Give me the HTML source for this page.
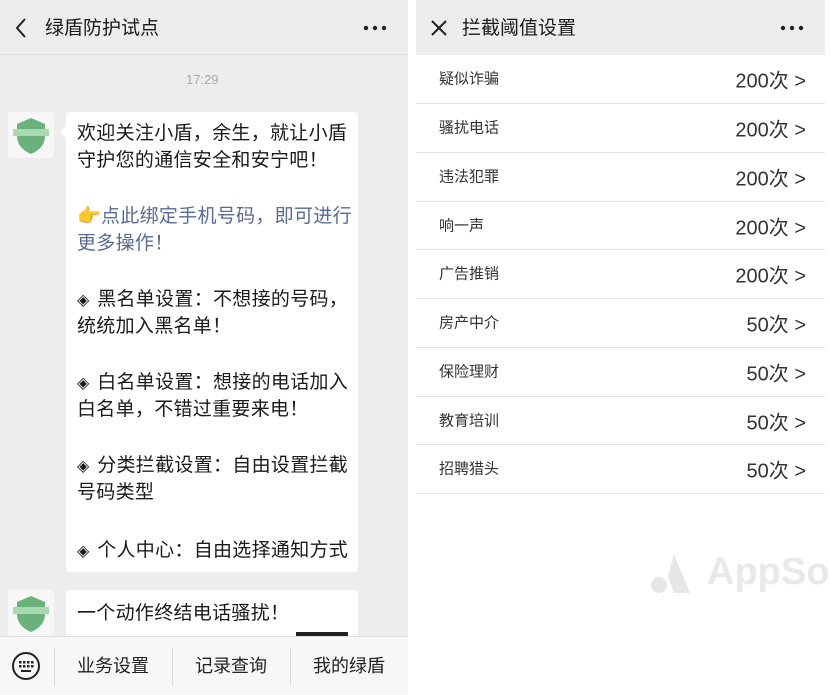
<!DOCTYPE html>
<html><head><meta charset="utf-8"><style>
*{margin:0;padding:0;box-sizing:border-box}
body{width:830px;height:695px;background:#fff;position:relative;overflow:hidden;font-family:"Liberation Sans","Noto Sans CJK SC",sans-serif;color:#1a1a1a}
.abs{position:absolute}
#L{left:0;top:0;width:408px;height:695px;background:#ededed}
.ln{position:absolute;left:77px;font-size:19px;line-height:27px;white-space:nowrap;letter-spacing:0.3px}
.ln i{font-style:normal;font-size:16px;margin-right:2px}
.av{position:absolute;left:8px;width:46px;height:46px;background:#f7f7f7;border-radius:3px}
.row{position:absolute;left:416px;width:409px;border-bottom:1px solid #e2e2e2;background:#fff}
.row .k{position:absolute;left:23px;top:50%;transform:translateY(-50%);font-size:15px;color:#333;margin-top:-1px}
.row .v{position:absolute;right:19px;top:50%;transform:translateY(-50%);font-size:20px;color:#333}
.tab{position:absolute;top:652px;font-size:18px;color:#222;width:118px;text-align:center}
</style></head><body>
<div id="L">
 <div class="abs" style="left:0;top:0;width:408px;height:55px;background:#ededed;border-bottom:1px solid #e0e0e0"></div>
 <svg class="abs" style="left:14px;top:17px" width="14" height="22"><path d="M11 2 L3 11 L11 20" stroke="#222" stroke-width="2" fill="none"/></svg>
 <div class="abs" style="left:45px;top:13px;font-size:19px;color:#1a1a1a">绿盾防护试点</div>
 <svg class="abs" style="left:362px;top:24px" width="26" height="8"><circle cx="4" cy="4" r="2.2" fill="#222"/><circle cx="13" cy="4" r="2.2" fill="#222"/><circle cx="22" cy="4" r="2.2" fill="#222"/></svg>
 <div class="abs" style="left:186px;top:72px;font-size:13px;color:#aaa">17:29</div>

 <div class="av" style="top:112px"><svg width="46" height="46"><path d="M23 6 L37 12 L37 24 Q37 36 23 42 Q9 36 9 24 L9 12 Z" fill="#6ab27c"/><rect x="5" y="17" width="36" height="7" fill="#a9d9b0"/></svg></div>
 <div class="abs" style="left:66px;top:112px;width:292px;height:460px;background:#fff;border-radius:4px"></div>
 <div class="abs" style="left:60px;top:126px;width:0;height:0;border:6px solid transparent;border-right-color:#fff;border-left:0"></div>
 <div class="ln" style="top:120px">欢迎关注小盾，余生，就让小盾</div>
 <div class="ln" style="top:147px">守护您的通信安全和安宁吧！</div>
 <div class="ln" style="top:203px;color:#576b95"><span style="color:#d7a77c">👉</span>点此绑定手机号码，即可进行</div>
 <div class="ln" style="top:230px;color:#576b95">更多操作！</div>
 <div class="ln" style="top:286px"><i>◈</i> 黑名单设置：不想接的号码，</div>
 <div class="ln" style="top:313px">统统加入黑名单！</div>
 <div class="ln" style="top:369px"><i>◈</i> 白名单设置：想接的电话加入</div>
 <div class="ln" style="top:396px">白名单，不错过重要来电！</div>
 <div class="ln" style="top:452px"><i>◈</i> 分类拦截设置：自由设置拦截</div>
 <div class="ln" style="top:479px">号码类型</div>
 <div class="ln" style="top:537px"><i>◈</i> 个人中心：自由选择通知方式</div>

 <div class="av" style="top:590px"><svg width="46" height="46"><path d="M23 6 L37 12 L37 24 Q37 36 23 42 Q9 36 9 24 L9 12 Z" fill="#6ab27c"/><rect x="5" y="17" width="36" height="7" fill="#a9d9b0"/></svg></div>
 <div class="abs" style="left:66px;top:590px;width:292px;height:50px;background:#fff;border-radius:4px"></div>
 <div class="ln" style="top:600px">一个动作终结电话骚扰！</div>
 <div class="abs" style="left:296px;top:632px;width:52px;height:4px;background:#222"></div>

 <div class="abs" style="left:0;top:636px;width:408px;height:59px;background:#f7f7f7;border-top:1px solid #ddd"></div>
 <svg class="abs" style="left:11px;top:651px" width="30" height="30"><circle cx="15" cy="15" r="13" stroke="#222" stroke-width="2" fill="none"/><g fill="#222"><rect x="8" y="10" width="2.5" height="2.5"/><rect x="12" y="10" width="2.5" height="2.5"/><rect x="16" y="10" width="2.5" height="2.5"/><rect x="20" y="10" width="2.5" height="2.5"/><rect x="8" y="14" width="2.5" height="2.5"/><rect x="12" y="14" width="2.5" height="2.5"/><rect x="16" y="14" width="2.5" height="2.5"/><rect x="20" y="14" width="2.5" height="2.5"/><rect x="10" y="19" width="10" height="2"/></g></svg>
 <div class="abs" style="left:54px;top:648px;width:1px;height:38px;background:#ddd"></div>
 <div class="abs" style="left:172px;top:648px;width:1px;height:38px;background:#ddd"></div>
 <div class="abs" style="left:290px;top:648px;width:1px;height:38px;background:#ddd"></div>
 <div class="tab" style="left:54px">业务设置</div>
 <div class="tab" style="left:172px">记录查询</div>
 <div class="tab" style="left:290px">我的绿盾</div>
</div>

<div class="abs" style="left:416px;top:0;width:409px;height:55px;background:#ededed"></div>
<svg class="abs" style="left:429px;top:18px" width="20" height="20"><path d="M3 3 L17 17 M17 3 L3 17" stroke="#222" stroke-width="2"/></svg>
<div class="abs" style="left:462px;top:13px;font-size:19px;color:#1a1a1a">拦截阈值设置</div>
<svg class="abs" style="left:779px;top:24px" width="26" height="8"><circle cx="4" cy="4" r="2.2" fill="#222"/><circle cx="13" cy="4" r="2.2" fill="#222"/><circle cx="22" cy="4" r="2.2" fill="#222"/></svg>
<div class="row" style="top:55px;height:49px"><span class="k">疑似诈骗</span><span class="v">200次 &gt;</span></div>
<div class="row" style="top:104px;height:49px"><span class="k">骚扰电话</span><span class="v">200次 &gt;</span></div>
<div class="row" style="top:153px;height:49px"><span class="k">违法犯罪</span><span class="v">200次 &gt;</span></div>
<div class="row" style="top:202px;height:48px"><span class="k">响一声</span><span class="v">200次 &gt;</span></div>
<div class="row" style="top:250px;height:49px"><span class="k">广告推销</span><span class="v">200次 &gt;</span></div>
<div class="row" style="top:299px;height:49px"><span class="k">房产中介</span><span class="v">50次 &gt;</span></div>
<div class="row" style="top:348px;height:49px"><span class="k">保险理财</span><span class="v">50次 &gt;</span></div>
<div class="row" style="top:397px;height:48px"><span class="k">教育培训</span><span class="v">50次 &gt;</span></div>
<div class="row" style="top:445px;height:49px"><span class="k">招聘猎头</span><span class="v">50次 &gt;</span></div>
<svg class="abs" style="left:648px;top:552px" width="44" height="44"><path d="M26 2 L42 41 L26 41 L20 24 Z" fill="#e6e6e6"/><circle cx="11" cy="33" r="8" fill="#e6e6e6"/></svg>
<div class="abs" style="left:707px;top:551px;font-size:38px;font-weight:bold;color:#e9e9e9">AppSo</div>
</body></html>
